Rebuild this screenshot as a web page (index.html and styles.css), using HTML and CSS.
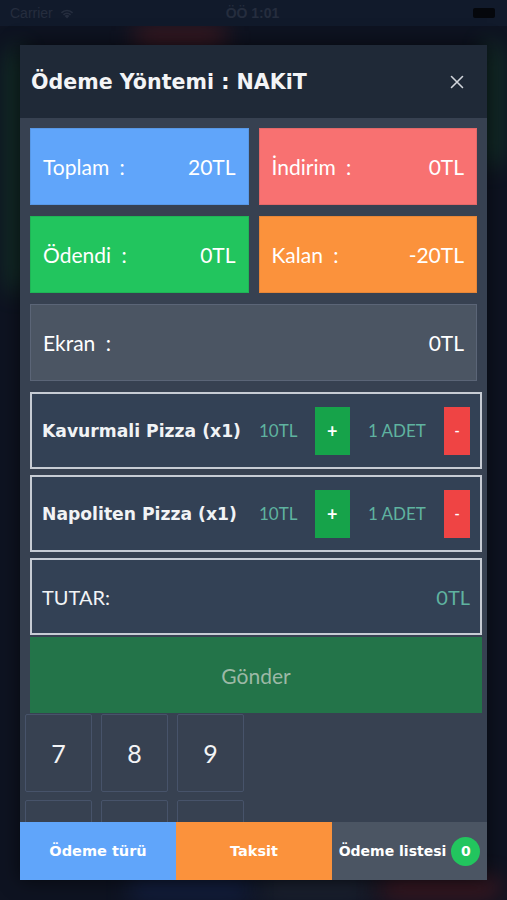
FILE: index.html
```html
<!DOCTYPE html>
<html lang="tr">
<head>
<meta charset="utf-8">
<link rel="stylesheet" href="styles.css">
</head>
<body>
<div class="screen">
  <div class="glow glow-red-top"></div>
  <div class="glow glow-green-left"></div>
  <div class="glow glow-green-right"></div>
  <div class="glow glow-blue-bottom"></div>
  <div class="glow glow-red-bottom"></div>
  <div class="glow glow-gray-bottom"></div>

  <div class="statusbar">
    <div class="sb-left">Carrier
      <svg class="wifi" width="16" height="12" viewBox="0 0 16 12"><path d="M8 11.5 L5.6 9 A3.4 3.4 0 0 1 10.4 9 Z M3.8 7.2 A6 6 0 0 1 12.2 7.2 L11 8.4 A4.3 4.3 0 0 0 5 8.4 Z M1.8 5.2 A8.8 8.8 0 0 1 14.2 5.2 L13 6.4 A7.1 7.1 0 0 0 3 6.4 Z" fill="currentColor"/></svg>
    </div>
    <div class="sb-time">ÖÖ 1:01</div>
    <div class="sb-right"><span class="battery"></span></div>
  </div>

  <div class="modal">
    <div class="modal-header">
      <h1 class="modal-title">Ödeme Yöntemi : NAKiT</h1>
      <svg class="close" width="14" height="14" viewBox="0 0 14 14"><path d="M1.5 1.5 L12.5 12.5 M12.5 1.5 L1.5 12.5" stroke="currentColor" stroke-width="1.6" stroke-linecap="round"/></svg>
    </div>
    <div class="modal-body">
      <div class="stats">
        <div class="stat stat-blue"><span class="stat-label">Toplam :</span><span>20TL</span></div>
        <div class="stat stat-red"><span class="stat-label">İndirim :</span><span>0TL</span></div>
        <div class="stat stat-green"><span class="stat-label">Ödendi :</span><span>0TL</span></div>
        <div class="stat stat-orange"><span class="stat-label">Kalan :</span><span>-20TL</span></div>
      </div>
      <div class="stat stat-screen"><span class="stat-label">Ekran :</span><span>0TL</span></div>

      <div class="rows">
        <div class="item">
          <span class="item-name">Kavurmali Pizza (x1)</span>
          <span class="item-price">10TL</span>
          <span class="btn-plus">+</span>
          <span class="item-qty">1 ADET</span>
          <span class="btn-minus">-</span>
        </div>
        <div class="item">
          <span class="item-name">Napoliten Pizza (x1)</span>
          <span class="item-price">10TL</span>
          <span class="btn-plus">+</span>
          <span class="item-qty">1 ADET</span>
          <span class="btn-minus">-</span>
        </div>
        <div class="item total">
          <span class="total-label">TUTAR:</span>
          <span class="total-value">0TL</span>
        </div>
      </div>
      <div class="send">Gönder</div>

      <div class="keypad">
        <div class="key">7</div>
        <div class="key">8</div>
        <div class="key">9</div>
        <div class="key"></div>
        <div class="key"></div>
        <div class="key"></div>
      </div>
    </div>
    <div class="modal-footer">
      <div class="tab tab-blue">Ödeme türü</div>
      <div class="tab tab-orange">Taksit</div>
      <div class="tab tab-gray">Ödeme listesi <span class="badge">0</span></div>
    </div>
  </div>
</div>
</body>
</html>
```

FILE: styles.css
```css
* { box-sizing: border-box; }
html, body { margin: 0; padding: 0; }
body {
  width: 507px;
  height: 900px;
  overflow: hidden;
  background: #0d1220;
  font-family: "Lato", "Noto Sans", sans-serif;
  color: #fff;
}
.screen {
  position: relative;
  width: 507px;
  height: 900px;
  overflow: hidden;
  background: #0e1321;
}
.glow {
  position: absolute;
  filter: blur(12px);
  opacity: 0.55;
}
.glow-red-top { left: 135px; top: 28px; width: 90px; height: 18px; background: #7a2020; }
.glow-green-left { left: 10px; top: 50px; width: 12px; height: 240px; background: #1f7a35; opacity: 0.5; }
.glow-green-right { left: 486px; top: 45px; width: 12px; height: 120px; background: #1f7a35; opacity: 0.5; }
.glow-blue-bottom { left: 130px; top: 882px; width: 120px; height: 14px; background: #1e3a8a; opacity: 0.5; }
.glow-gray-bottom { left: 260px; top: 882px; width: 110px; height: 14px; background: #4b5563; opacity: 0.4; }
.glow-red-bottom { left: 380px; top: 880px; width: 120px; height: 16px; background: #7f1d1d; opacity: 0.6; }

.statusbar {
  position: relative;
  height: 26px;
  display: flex;
  align-items: center;
  justify-content: space-between;
  padding: 0 12px 0 10px;
  background: #111a2b;
  color: #252d3e;
  font-family: "Liberation Sans", sans-serif;
  font-size: 14px;
}
.sb-left { display: flex; align-items: center; gap: 6px; width: 120px; }
.sb-time { font-weight: bold; }
.sb-right { width: 120px; display: flex; justify-content: flex-end; }
.battery { width: 22px; height: 10px; background: #05070c; border-radius: 2px; }

.modal {
  position: relative;
  margin: 19px 20px 0;
  width: 467px;
  height: 835px;
  display: flex;
  flex-direction: column;
  background: #374151;
  box-shadow: 0 0 18px rgba(0,0,0,0.6);
}
.modal-header {
  height: 73px;
  flex: none;
  background: #1f2937;
  display: flex;
  align-items: center;
  justify-content: space-between;
  padding: 0 23px 0 11px;
}
.modal-title {
  margin: 0;
  font-family: "DejaVu Sans", sans-serif;
  font-size: 20.6px;
  font-weight: 700;
  color: #f3f4f6;
}
.close { color: #d1d5db; }

.modal-body {
  flex: 1;
  overflow: hidden;
  padding: 10px 10px 0;
}
.stats {
  display: grid;
  grid-template-columns: 1fr 1fr;
  gap: 11px 10px;
}
.stat {
  height: 77px;
  display: flex;
  align-items: center;
  justify-content: space-between;
  padding: 0 12px;
  font-size: 21px;
  color: #fff;
  border: 1px solid rgba(0,0,0,0.08);
}
.stat-label { word-spacing: 5px; }
.stat-blue { background: #60a5fa; }
.stat-red { background: #f87171; }
.stat-green { background: #22c55e; }
.stat-orange { background: #fb923c; }
.stat-screen {
  margin-top: 11px;
  background: #4b5563;
  border: 1px solid #5b6577;
}

.rows {
  margin-top: 11px;
  width: 452px;
  display: flex;
  flex-direction: column;
  gap: 6px;
}
.item {
  height: 77px;
  border: 2px solid #c7ccd4;
  background: #334155;
  display: flex;
  align-items: center;
  padding: 0 10px 0 10px;
}
.item-name {
  font-family: "DejaVu Sans", sans-serif;
  font-size: 17.2px;
  font-weight: 700;
  color: #f1f3f5;
  width: 218px;
  white-space: nowrap;
}
.item-price {
  font-size: 17px;
  color: #5fb3a0;
  width: 56px;
}
.btn-plus, .btn-minus {
  height: 48px;
  display: flex;
  align-items: center;
  justify-content: center;
  color: #fff;
  font-weight: 700;
}
.btn-plus { width: 35px; background: #16a34a; font-size: 18px; }
.btn-minus { width: 26px; background: #ef4444; font-size: 14px; }
.item-qty {
  font-size: 17px;
  color: #5fb3a0;
  width: 95px;
  text-align: center;
}
.total { justify-content: space-between; }
.total-label { font-size: 20px; color: #f1f3f5; }
.total-value { font-size: 20px; color: #5fb3a0; }

.send {
  width: 452px;
  height: 76px;
  margin-top: 2px;
  background: #237449;
  display: flex;
  align-items: center;
  justify-content: center;
  font-size: 21px;
  color: #9cb9a6;
}

.keypad {
  margin-left: -5px;
  margin-top: 1px;
  display: grid;
  grid-template-columns: repeat(3, 67px);
  gap: 8px 9px;
}
.key {
  height: 78px;
  border: 1px solid #47536a;
  border-radius: 2px;
  display: flex;
  align-items: center;
  justify-content: center;
  font-size: 25px;
  color: #f3f4f6;
}

.modal-footer {
  height: 58px;
  flex: none;
  display: grid;
  grid-template-columns: 156px 156px 155px;
}
.tab {
  display: flex;
  align-items: center;
  justify-content: center;
  font-family: "DejaVu Sans", sans-serif;
  font-size: 14.5px;
  font-weight: 700;
  color: #fff;
}
.tab-blue { background: #60a5fa; }
.tab-orange { background: #fb923c; }
.tab-gray { background: #4b5563; gap: 5px; font-size: 14px; }
.badge {
  width: 29px;
  height: 29px;
  border-radius: 50%;
  background: #22c55e;
  display: inline-flex;
  align-items: center;
  justify-content: center;
  font-size: 14px;
}
```
